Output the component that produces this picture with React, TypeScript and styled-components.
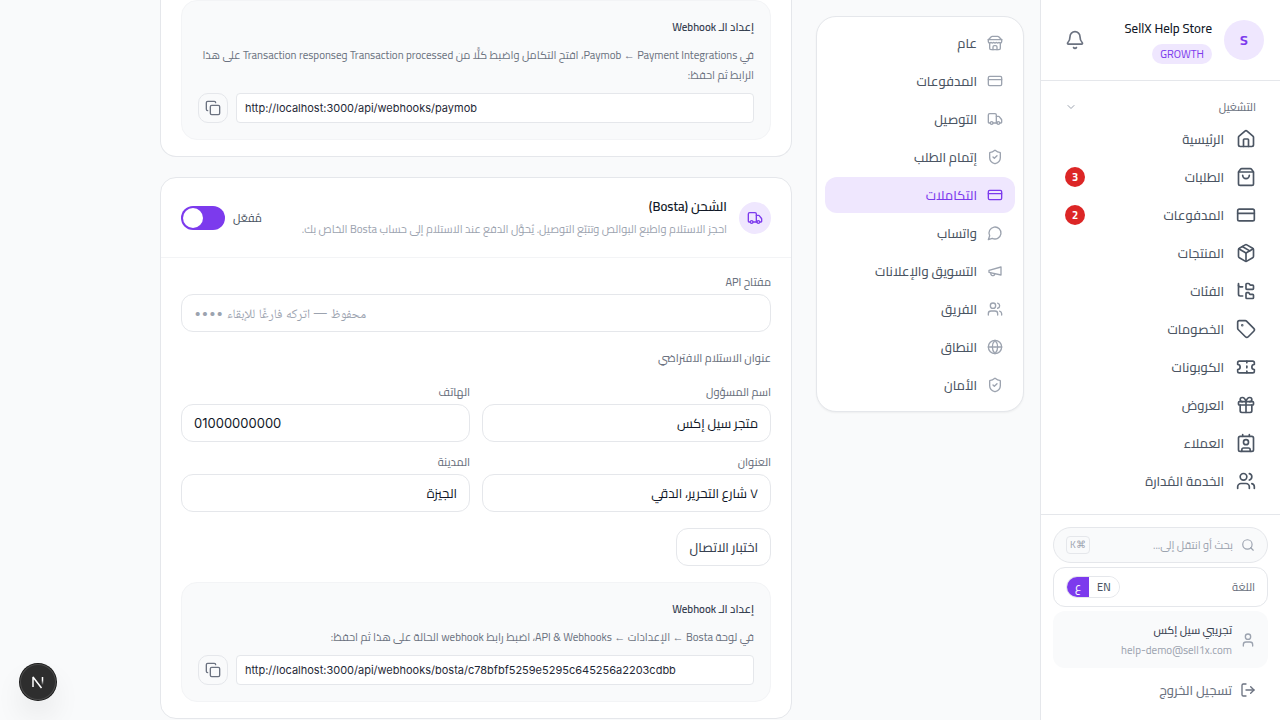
import React from "react";
import styled, { createGlobalStyle, css } from "styled-components";
import {
  Bell, ChevronDown, House, ShoppingBag, CreditCard, Package, FolderTree, Tag, Ticket, Gift,
  Contact, Users, Search, User, LogOut, Truck, ShieldCheck, Globe, Copy,
} from "lucide-react";

const GlobalStyle = createGlobalStyle`
  *, *::before, *::after { box-sizing: border-box; }
  body {
    margin: 0;
    background: #f9fafb;
    color: #111827;
    font-family: Cairo, "Liberation Sans", sans-serif;
    font-size: 13px;
  }
  button, input { font: inherit; color: inherit; margin: 0; }
  button { cursor: pointer; padding: 0; background: none; border: 0; }
  a { color: inherit; text-decoration: none; }
  h2, h3, p, ul { margin: 0; padding: 0; }
  ul { list-style: none; }
`;

const Shell = styled.div`
  display: flex;
  height: 100vh;
  overflow: hidden;
`;

const Sidebar = styled.aside`
  display: flex;
  flex-direction: column;
  flex: none;
  width: 240px;
  background: #fff;
  border-left: 1px solid #e5e7eb;
`;

const StoreHeader = styled.header`
  display: flex;
  align-items: center;
  gap: 12px;
  height: 81px;
  padding: 0 16px;
  border-bottom: 1px solid #e5e7eb;
`;

const Avatar = styled.span`
  display: grid;
  place-items: center;
  width: 40px;
  height: 40px;
  border-radius: 50%;
  background: #efe7fe;
  color: #7c3aed;
  font-size: 14px;
  font-weight: 700;
`;

const StoreInfo = styled.div`
  flex: 1;
  display: flex;
  flex-direction: column;
  align-items: flex-start;
  gap: 4px;
`;

const StoreName = styled.span`
  font-size: 13px;
  font-weight: 500;
  line-height: 24px;
`;

const Plan = styled.span`
  padding: 0 8px;
  border-radius: 10px;
  background: #efe7fe;
  color: #7c3aed;
  font-size: 11px;
  line-height: 20px;
`;

const BellButton = styled.button`
  display: grid;
  place-items: center;
  width: 36px;
  height: 36px;
  color: #6b7280;
`;

const MainNav = styled.nav`
  flex: 1;
  min-height: 0;
  overflow: hidden;
  padding: 16px 12px 0;
`;

const SectionToggle = styled.button`
  display: flex;
  align-items: center;
  justify-content: space-between;
  width: 100%;
  height: 20px;
  margin-bottom: 4px;
  padding: 0 12px;
  color: #6b7280;
  font-size: 11px;
  font-weight: 500;
  svg { color: #9ca3af; }
`;

const NavList = styled.ul`
  display: flex;
  flex-direction: column;
  gap: 2px;
`;

const NavLink = styled.a`
  display: flex;
  align-items: center;
  gap: 12px;
  height: 36px;
  padding: 0 12px;
  color: #4b5563;
  font-size: 13px;
  font-weight: 500;
`;

const Count = styled.span`
  display: grid;
  place-items: center;
  width: 20px;
  height: 20px;
  margin-right: auto;
  border-radius: 50%;
  background: #dc2626;
  color: #fff;
  font-size: 11px;
  font-weight: 700;
`;

const SidebarFooter = styled.footer`
  display: flex;
  flex-direction: column;
  gap: 4px;
  padding: 12px;
  border-top: 1px solid #e5e7eb;
`;

const SearchBox = styled.label`
  display: flex;
  align-items: center;
  gap: 8px;
  height: 36px;
  padding: 0 12px;
  border: 1px solid #e5e7eb;
  border-radius: 18px;
  background: #f9fafb;
  color: #9ca3af;
  font-size: 11px;
  svg { flex: none; }
  input {
    flex: 1;
    min-width: 0;
    padding: 0;
    border: 0;
    outline: 0;
    background: none;
  }
  input::placeholder { color: #9ca3af; }
`;

const Shortcut = styled.kbd`
  padding: 0 3px;
  border: 1px solid #e5e7eb;
  border-radius: 4px;
  font-family: inherit;
  font-size: 10px;
  line-height: 16px;
`;

const LanguageRow = styled.div`
  display: flex;
  align-items: center;
  justify-content: space-between;
  height: 40px;
  padding: 0 12px;
  border: 1px solid #e5e7eb;
  border-radius: 12px;
  color: #6b7280;
  font-size: 11px;
  font-weight: 500;
`;

const LanguageSwitch = styled.div`
  display: flex;
  overflow: hidden;
  border: 1px solid #e5e7eb;
  border-radius: 11px;
`;

const LanguageButton = styled.button<{ $active?: boolean }>`
  height: 20px;
  padding: 0 8px;
  font-size: 11px;
  color: ${(p) => (p.$active ? "#fff" : "#4b5563")};
  background: ${(p) => (p.$active ? "#7c3aed" : "#fff")};
`;

const UserCard = styled.div`
  display: flex;
  align-items: center;
  gap: 8px;
  height: 57px;
  padding: 0 12px;
  border-radius: 12px;
  background: #f9fafb;
  color: #9ca3af;
  font-size: 11px;
  line-height: 20px;
  strong {
    display: block;
    color: #374151;
    font-weight: 500;
  }
`;

const Logout = styled.button`
  display: flex;
  align-items: center;
  gap: 8px;
  height: 36px;
  padding: 0 12px;
  color: #6b7280;
  font-size: 13px;
  font-weight: 500;
`;

const Main = styled.main`
  flex: 1;
  min-width: 0;
  display: flex;
  align-items: flex-start;
  gap: 24px;
  padding: 0 16px;
  overflow-y: auto;
  scrollbar-width: none;
`;

const SettingsNav = styled.nav`
  flex: none;
  width: 208px;
  margin-top: 16px;
  padding: 8px;
  border: 1px solid #e5e7eb;
  border-radius: 20px;
  background: #fff;
  box-shadow: 0 1px 2px rgba(0, 0, 0, 0.05);
`;

const SettingsLink = styled.a<{ $active?: boolean }>`
  display: flex;
  align-items: center;
  gap: 10px;
  height: 36px;
  padding: 0 12px;
  border-radius: 12px;
  color: #4b5563;
  font-size: 13px;
  font-weight: 500;
  svg { color: #9ca3af; }
  ${(p) => p.$active && css`
    background: #efe7fe;
    color: #7c3aed;
    svg { color: inherit; }
  `}
`;

const Content = styled.div`
  flex: 1;
  min-width: 0;
  max-width: 632px;
  display: flex;
  flex-direction: column;
  gap: 20px;
`;

const Card = styled.section<{ $continued?: boolean }>`
  border: 1px solid #e5e7eb;
  border-radius: 16px;
  background: #fff;
  ${(p) => p.$continued && css`
    border-top: 0;
    border-radius: 0 0 16px 16px;
  `}
`;

const CardHeader = styled.header`
  display: flex;
  align-items: center;
  gap: 12px;
  padding: 16px 20px;
  border-bottom: 1px solid #f3f4f6;
`;

const IconDisc = styled.span`
  display: grid;
  place-items: center;
  flex: none;
  width: 32px;
  height: 32px;
  border-radius: 50%;
  background: #efe7fe;
  color: #7c3aed;
`;

const CardHeading = styled.div`
  flex: 1;
  min-width: 0;
  h2 {
    font-size: 13px;
    font-weight: 600;
    line-height: 24px;
  }
  p {
    color: #9ca3af;
    font-size: 11px;
    line-height: 23px;
    white-space: nowrap;
  }
`;

const SwitchLabel = styled.label`
  display: flex;
  align-items: center;
  gap: 8px;
  color: #4b5563;
  font-size: 11px;
  font-weight: 500;
`;

const Switch = styled.input`
  appearance: none;
  width: 44px;
  height: 24px;
  border-radius: 12px;
  background: #d1d5db;
  padding: 2px;
  &::before {
    content: "";
    display: block;
    width: 20px;
    height: 20px;
    border-radius: 50%;
    background: #fff;
  }
  &:checked { background: #7c3aed; }
  &:checked::before { margin-right: 20px; }
`;

const CardBody = styled.div<{ $flush?: boolean }>`
  display: flex;
  flex-direction: column;
  align-items: stretch;
  gap: 16px;
  padding: ${(p) => (p.$flush ? "0 20px 16px" : "16px 20px")};
`;

const FieldGrid = styled.div`
  display: grid;
  grid-template-columns: 1fr 1fr;
  gap: 12px;
`;

const Field = styled.label`
  display: flex;
  flex-direction: column;
  gap: 4px;
  color: #6b7280;
  font-size: 11px;
  font-weight: 500;
  line-height: 16px;
`;

const TextInput = styled.input`
  width: 100%;
  height: 38px;
  padding: 0 12px;
  border: 1px solid #e5e7eb;
  border-radius: 12px;
  background: #fff;
  color: #111827;
  font-size: 13px;
  font-weight: 400;
  &[dir="ltr"] { font-family: Inter, "Noto Naskh Arabic", sans-serif; }
  &::placeholder { color: #9ca3af; }
`;

const GroupTitle = styled.h3`
  color: #6b7280;
  font-size: 11px;
  font-weight: 500;
  line-height: 20px;
`;

const OutlineButton = styled.button`
  align-self: flex-start;
  height: 38px;
  padding: 0 12px;
  border: 1px solid #e5e7eb;
  border-radius: 12px;
  background: #fff;
  color: #374151;
  font-size: 13px;
  font-weight: 500;
`;

const Panel = styled.section`
  display: flex;
  flex-direction: column;
  gap: 8px;
  padding: 16px;
  border: 1px solid #f3f4f6;
  border-radius: 16px;
  background: #f9fafb;
  line-height: 20px;
  h3 {
    color: #374151;
    font-size: 11px;
    font-weight: 600;
  }
  p {
    color: #6b7280;
    font-size: 11px;
  }
`;

const UrlRow = styled.div`
  display: flex;
  gap: 8px;
`;

const UrlInput = styled.input`
  flex: 1;
  min-width: 0;
  height: 30px;
  padding: 0 8px;
  border: 1px solid #e5e7eb;
  border-radius: 4px;
  background: #fff;
  color: #1f2937;
  font-family: Inter, sans-serif;
  font-size: 11px;
`;

const CopyButton = styled.button`
  display: grid;
  place-items: center;
  width: 30px;
  height: 30px;
  border: 1px solid #e5e7eb;
  border-radius: 10px;
  color: #6b7280;
`;

const DevBadge = styled.button`
  position: fixed;
  left: 20px;
  bottom: 20px;
  display: grid;
  place-items: center;
  width: 36px;
  height: 36px;
  border-radius: 50%;
  background: #2e2e2e;
  box-shadow: 0 0 0 1px #171717, inset 0 0 0 1px #4a4a4a, 0 16px 32px -8px rgba(0, 0, 0, 0.24);
`;

type IconProps = { size?: number; strokeWidth?: number };

const drawIcon = (...paths: string[]) =>
  function Icon({ size = 24, strokeWidth = 2 }: IconProps) {
    return (
      <svg width={size} height={size} viewBox="0 0 24 24" fill="none" stroke="currentColor"
        strokeWidth={strokeWidth} strokeLinecap="round" strokeLinejoin="round" aria-hidden="true">
        {paths.map((d) => <path key={d} d={d} />)}
      </svg>
    );
  };

const StoreIcon = drawIcon(
  "m2 7 4.41-4.41A2 2 0 0 1 7.83 2h8.34a2 2 0 0 1 1.42.59L22 7",
  "M4 12v8a2 2 0 0 0 2 2h12a2 2 0 0 0 2-2v-8",
  "M15 22v-4a2 2 0 0 0-2-2h-2a2 2 0 0 0-2 2v4",
  "M2 7h20",
  "M22 7v3a2 2 0 0 1-2 2a2.7 2.7 0 0 1-1.59-.63.7.7 0 0 0-.82 0A2.7 2.7 0 0 1 16 12a2.7 2.7 0 0 1-1.59-.63.7.7 0 0 0-.82 0A2.7 2.7 0 0 1 12 12a2.7 2.7 0 0 1-1.59-.63.7.7 0 0 0-.82 0A2.7 2.7 0 0 1 8 12a2.7 2.7 0 0 1-1.59-.63.7.7 0 0 0-.82 0A2.7 2.7 0 0 1 4 12a2 2 0 0 1-2-2V7",
);
const MegaphoneIcon = drawIcon("m3 11 18-5v12L3 14v-3z", "M11.6 16.8a3 3 0 1 1-5.8-1.6");
const ChatIcon = drawIcon("M7.9 20A9 9 0 1 0 4 16.1L2 22Z");

const mainItems = [
  { label: "الرئيسية", Icon: House },
  { label: "الطلبات", Icon: ShoppingBag, count: 3 },
  { label: "المدفوعات", Icon: CreditCard, count: 2 },
  { label: "المنتجات", Icon: Package },
  { label: "الفئات", Icon: FolderTree },
  { label: "الخصومات", Icon: Tag },
  { label: "الكوبونات", Icon: Ticket },
  { label: "العروض", Icon: Gift },
  { label: "العملاء", Icon: Contact },
  { label: "الخدمة المُدارة", Icon: Users },
];

const settingsItems = [
  { label: "عام", Icon: StoreIcon },
  { label: "المدفوعات", Icon: CreditCard },
  { label: "التوصيل", Icon: Truck },
  { label: "إتمام الطلب", Icon: ShieldCheck },
  { label: "التكاملات", Icon: CreditCard, active: true },
  { label: "واتساب", Icon: ChatIcon },
  { label: "التسويق والإعلانات", Icon: MegaphoneIcon },
  { label: "الفريق", Icon: Users },
  { label: "النطاق", Icon: Globe },
  { label: "الأمان", Icon: ShieldCheck },
];

function WebhookPanel({ url, children }: { url: string; children: React.ReactNode }) {
  return (
    <Panel>
      <h3>إعداد الـ Webhook</h3>
      <p>{children}</p>
      <UrlRow>
        <UrlInput dir="ltr" readOnly value={url} aria-label="Webhook URL" />
        <CopyButton type="button" aria-label="نسخ"><Copy size={16} /></CopyButton>
      </UrlRow>
    </Panel>
  );
}

export default function App() {
  return (
    <Shell dir="rtl" lang="ar">
      <GlobalStyle />
      <Sidebar>
        <StoreHeader>
          <Avatar>S</Avatar>
          <StoreInfo>
            <StoreName>SellX Help Store</StoreName>
            <Plan>GROWTH</Plan>
          </StoreInfo>
          <BellButton type="button" aria-label="الإشعارات"><Bell size={20} /></BellButton>
        </StoreHeader>
        <MainNav>
          <SectionToggle type="button">التشغيل<ChevronDown size={12} /></SectionToggle>
          <NavList>
            {mainItems.map(({ label, Icon, count }) => (
              <li key={label}>
                <NavLink href="#">
                  <Icon size={20} />
                  {label}
                  {count && <Count>{count}</Count>}
                </NavLink>
              </li>
            ))}
          </NavList>
        </MainNav>
        <SidebarFooter>
          <SearchBox>
            <Search size={14} />
            <input type="text" placeholder="بحث أو انتقل إلى..." aria-label="بحث" />
            <Shortcut>⌘K</Shortcut>
          </SearchBox>
          <LanguageRow>
            اللغة
            <LanguageSwitch>
              <LanguageButton type="button">EN</LanguageButton>
              <LanguageButton type="button" $active>ع</LanguageButton>
            </LanguageSwitch>
          </LanguageRow>
          <UserCard>
            <User size={16} />
            <div>
              <strong>تجريبي سيل إكس</strong>
              help-demo@sell1x.com
            </div>
          </UserCard>
          <Logout type="button"><LogOut size={16} />تسجيل الخروج</Logout>
        </SidebarFooter>
      </Sidebar>

      <Main>
        <SettingsNav>
          <NavList>
            {settingsItems.map(({ label, Icon, active }) => (
              <li key={label}>
                <SettingsLink href="#" $active={active}>
                  <Icon size={16} />
                  {label}
                </SettingsLink>
              </li>
            ))}
          </NavList>
        </SettingsNav>

        <Content>
          <Card $continued>
            <CardBody $flush>
              <WebhookPanel url="http://localhost:3000/api/webhooks/paymob">
                في Paymob ← Payment Integrations، افتح التكامل واضبط كلًّا من Transaction processed وTransaction response على هذا الرابط ثم احفظ:
              </WebhookPanel>
            </CardBody>
          </Card>

          <Card>
            <CardHeader>
              <IconDisc><Truck size={16} /></IconDisc>
              <CardHeading>
                <h2>الشحن (Bosta)</h2>
                <p>احجز الاستلام واطبع البوالص وتتبّع التوصيل. يُحوَّل الدفع عند الاستلام إلى حساب Bosta الخاص بك.</p>
              </CardHeading>
              <SwitchLabel>
                مُفعّل
                <Switch type="checkbox" role="switch" defaultChecked />
              </SwitchLabel>
            </CardHeader>
            <CardBody>
              <Field>
                مفتاح API
                <TextInput type="password" dir="ltr" placeholder="•••• محفوظ — اتركه فارغًا للإبقاء" />
              </Field>
              <GroupTitle>عنوان الاستلام الافتراضي</GroupTitle>
              <FieldGrid>
                <Field>اسم المسؤول<TextInput defaultValue="متجر سيل إكس" /></Field>
                <Field>الهاتف<TextInput dir="ltr" type="tel" defaultValue="01000000000" /></Field>
                <Field>العنوان<TextInput defaultValue="٧ شارع التحرير، الدقي" /></Field>
                <Field>المدينة<TextInput defaultValue="الجيزة" /></Field>
              </FieldGrid>
              <OutlineButton type="button">اختبار الاتصال</OutlineButton>
              <WebhookPanel url="http://localhost:3000/api/webhooks/bosta/c78bfbf5259e5295c645256a2203cdbb">
                في لوحة Bosta ← الإعدادات ← API &amp; Webhooks، اضبط رابط webhook الحالة على هذا ثم احفظ:
              </WebhookPanel>
            </CardBody>
          </Card>
        </Content>
      </Main>

      <DevBadge type="button" aria-label="Next.js">
        <svg width="16" height="16" viewBox="0 0 16 16" fill="none" aria-hidden="true">
          <defs>
            <linearGradient id="leg" x1="0" y1="3" x2="0" y2="11" gradientUnits="userSpaceOnUse">
              <stop offset="0.4" stopColor="#fff" />
              <stop offset="1" stopColor="#fff" stopOpacity="0" />
            </linearGradient>
          </defs>
          <path d="M3 13V3l8.500 11" stroke="#fff" strokeWidth="1.500" strokeLinejoin="bevel" />
          <path d="M12.500 3v8" stroke="url(#leg)" strokeWidth="1.500" />
        </svg>
      </DevBadge>
    </Shell>
  );
}
